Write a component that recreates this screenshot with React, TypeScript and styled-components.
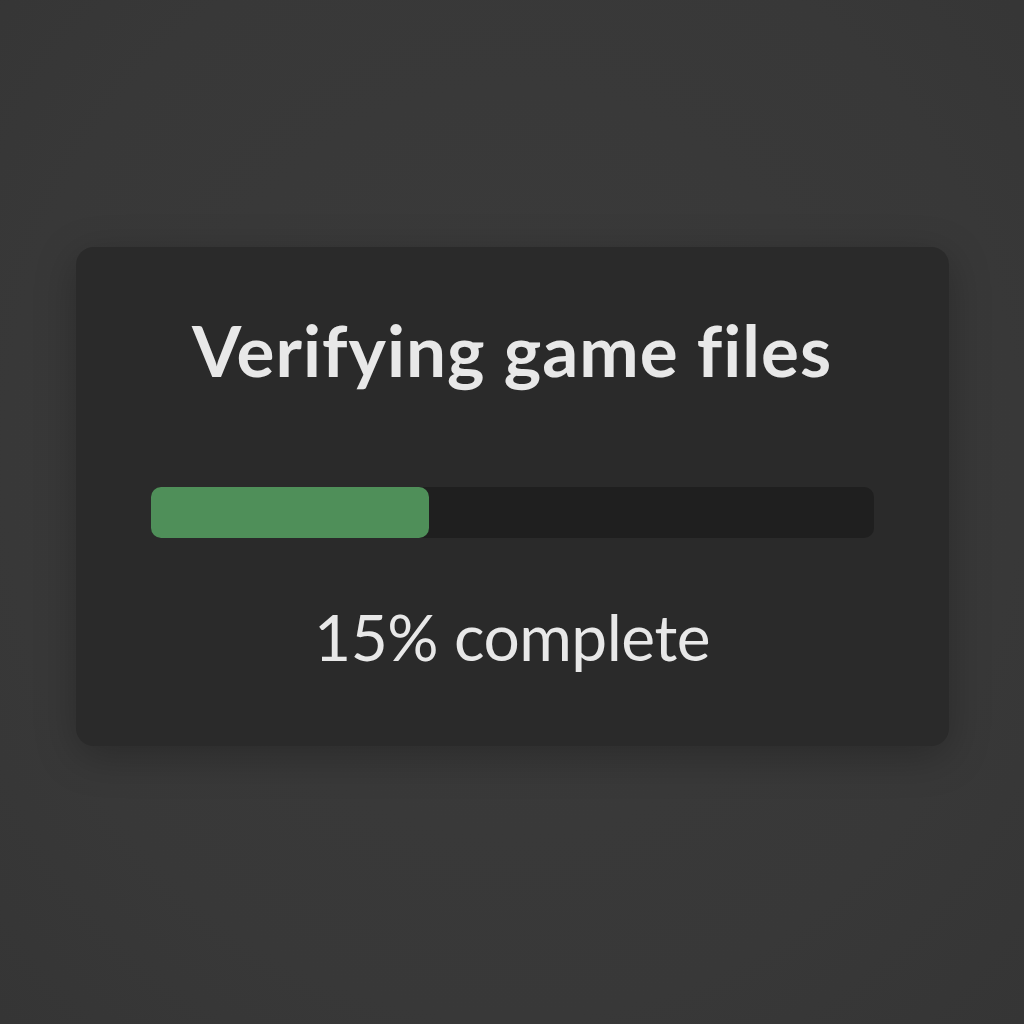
import React from "react";
import styled, { createGlobalStyle } from "styled-components";

const Global = createGlobalStyle`
  html, body { margin: 0; padding: 0; background: #393939; }
  body { font-family: Lato, "Open Sans", sans-serif; }
`;

const Page = styled.div`
  width: 1024px;
  height: 1024px;
  box-sizing: border-box;
  padding-top: 247px;
  display: flex;
  justify-content: center;
  align-items: flex-start;
  background: radial-gradient(ellipse at 50% 45%, #3b3b3b 0%, #383838 70%, #353535 100%);
`;

const Card = styled.div`
  width: 873px;
  height: 499px;
  box-sizing: border-box;
  background: #2a2a2a;
  border-radius: 18px;
  box-shadow: 0 10px 40px rgba(0, 0, 0, 0.25);
  padding: 63px 75px 0;
  display: flex;
  flex-direction: column;
  align-items: center;
`;

const Title = styled.h1`
  margin: 0;
  height: 80px;
  line-height: 80px;
  font-family: Lato, "Open Sans", sans-serif;
  font-size: 71px;
  font-weight: 700;
  letter-spacing: 1px;
  color: #e8e8e8;
  white-space: nowrap;
  font-variant-ligatures: none;
`;

const Track = styled.div`
  margin-top: 97px;
  width: 723px;
  height: 51px;
  border-radius: 10px;
  background: #1f1f1f;
  display: flex;
`;

const Fill = styled.div`
  height: 100%;
  border-radius: 10px;
  background: #4f8f59;
`;

const Label = styled.div`
  margin-top: 59px;
  height: 80px;
  line-height: 80px;
  font-family: Lato, "Open Sans", sans-serif;
  font-size: 64px;
  letter-spacing: -0.5px;
  font-weight: 400;
  color: #e8e8e8;
  white-space: nowrap;
`;

export default function App() {
  const fillWidth = 278;
  return (
    <>
      <Global />
      <Page>
        <Card>
          <Title>Verifying game files</Title>
          <Track>
            <Fill style={{ width: fillWidth }} />
          </Track>
          <Label>15% complete</Label>
        </Card>
      </Page>
    </>
  );
}
